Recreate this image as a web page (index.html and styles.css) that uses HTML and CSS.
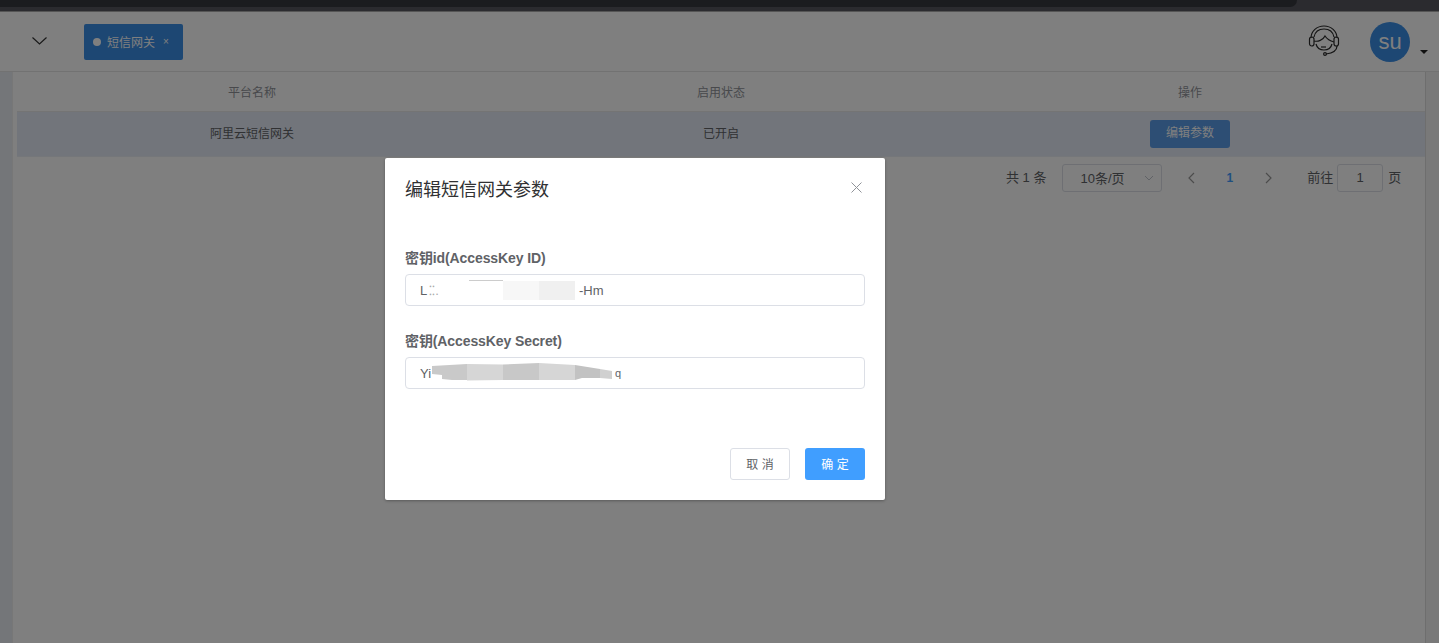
FILE: index.html
```html
<!DOCTYPE html>
<html lang="zh-CN">
<head>
<meta charset="utf-8">
<title>短信网关</title>
<link rel="stylesheet" href="styles.css">
</head>
<body>
<div class="chrome"><div class="chrome-tab"></div></div>
<div class="app">
  <header class="topbar">
    <svg class="collapse" width="15" height="8" viewBox="0 0 15 8"><path d="M.5.500l7 6.500 7-6.500" fill="none" stroke="#333" stroke-width="1.200"/></svg>
    <div class="tag"><span class="tag-dot"></span><span>短信网关</span><span class="tag-x">×</span></div>
    <div class="spacer"></div>
    <svg class="agent" width="32" height="32" viewBox="0 0 32 32" fill="none" stroke="#2a2a2a" stroke-width="1.200">
      <path d="M3 13C3 6 9 1 16 1s13 5 13 12"/>
      <path d="M6 12C7 7 11 4 16 4s9 3 10 8"/>
      <rect x="1.500" y="12" width="4.500" height="9" rx="2.200"/>
      <rect x="26" y="12" width="4.500" height="9" rx="2.200"/>
      <path d="M6 16c4 1 9-1 11-5 2 3 5 5 9 6"/>
      <path d="M8 19c1 4 4 6 8 6s7-2 8-6"/>
      <path d="M13 22h5"/>
      <path d="M29 21c0 4-4 7-11 8"/>
      <circle cx="17" cy="29" r="1.400"/>
    </svg>
    <div class="avatar">su</div>
    <span class="caret"></span>
  </header>
  <main class="content">
    <div class="side"></div>
    <div class="panel">
      <div class="row head"><div>平台名称</div><div>启用状态</div><div>操作</div></div>
      <div class="row body"><div class="cell">阿里云短信网关</div><div class="cell">已开启</div><div><span class="btn-edit">编辑参数</span></div></div>
      <div class="pager">
        <span class="pg-text">共 1 条</span>
        <div class="pg-select"><span class="pg-size">10条/页</span><svg width="10" height="6" viewBox="0 0 10 6"><path d="M1 1l4 4 4-4" fill="none" stroke="#c0c4cc"/></svg></div>
        <svg class="pg-arrow" width="8" height="12" viewBox="0 0 8 12"><path d="M7 1L2 6l5 5" fill="none" stroke="#999" stroke-width="1.200"/></svg>
        <b class="pg-num">1</b>
        <svg class="pg-arrow" width="8" height="12" viewBox="0 0 8 12"><path d="M1 1l5 5-5 5" fill="none" stroke="#999" stroke-width="1.200"/></svg>
        <span class="pg-text pg-goto">前往</span>
        <div class="pg-input">1</div>
        <span class="pg-text">页</span>
      </div>
    </div>
    <div class="gutter"></div>
  </main>
</div>
<div class="mask">
  <div class="dialog">
    <div class="dlg-head">
      <span class="dlg-title">编辑短信网关参数</span>
      <svg class="dlg-close" width="11" height="11" viewBox="0 0 11 11"><path d="M.5.500l10 10M10.500.500l-10 10" stroke="#909399" fill="none"/></svg>
    </div>
    <div class="field">
      <label class="lbl">密钥id(AccessKey ID)</label>
      <div class="inp"><span>L</span><span class="faint">⁚⁚.</span><svg class="blot blot-a" width="125" height="20" viewBox="0 0 125 20"><rect x="19" y="0" width="34" height="1" fill="#ccc"/><rect x="53" y="1" width="36" height="19" fill="#f7f7f7"/><rect x="89" y="1" width="36" height="19" fill="#f0f0f0"/></svg><span class="tail">-Hm</span></div>
    </div>
    <div class="field">
      <label class="lbl">密钥(AccessKey Secret)</label>
      <div class="inp"><span>Yi</span><svg class="blot blot-b" width="180" height="18" viewBox="0 0 180 18"><polygon points="0,3 35,1 35,17 20,17 10,16 10,12 0,11" fill="#c9c9c9"/><polygon points="35,1 71,1.500 71,17 35,17.500" fill="#d6d6d6"/><polygon points="71,1.500 107,0 107,17 71,17" fill="#c8c8c8"/><polygon points="107,0 143,2 143,17 107,17" fill="#d6d6d6"/><polygon points="143,2 168,6 168,15 150,15 143,17" fill="#c2c2c2"/><polygon points="168,6 180,8 180,16 168,15" fill="#d0d0d0"/></svg><span class="tail2">q</span></div>
    </div>
    <div class="dlg-foot">
      <span class="btn plain">取 消</span>
      <span class="btn primary">确 定</span>
    </div>
  </div>
</div>
</body>
</html>
```
FILE: styles.css
```css
* { box-sizing: border-box; }
html, body { margin: 0; height: 100%; }
body {
  width: 1439px; height: 643px; overflow: hidden; position: relative;
  background: #fff; color: #606266;
  font-family: "Liberation Sans", "Noto Sans CJK SC", sans-serif; font-size: 12px;
}
.chrome { height: 12px; background: #2b2b2f; border-bottom: 1px solid #555; }
.chrome-tab { width: 1297px; height: 7px; background: #1b1c1f; border-radius: 0 0 8px 0; }
.app { height: 631px; display: flex; flex-direction: column; }
.topbar {
  height: 60px; flex: none; display: flex; align-items: center;
  border-bottom: 1px solid #e4e4e4; background: #fff; padding-left: 32px;
}
.collapse { flex: none; margin-top: -2px; }
.tag {
  margin-left: 37px; width: 99px; height: 36px; background: #3a8ee6; border-radius: 2px;
  display: flex; align-items: center; color: #fff; padding-left: 9px;
  font-size: 12px;
}
.tag-dot { width: 8px; height: 8px; border-radius: 50%; background: #fff; margin-right: 6px; }
.tag-x { margin-left: 8px; font-size: 10px; }
.spacer { flex: 1; }
.agent { flex: none; margin-right: 30px; margin-top: -2px; }
.avatar {
  width: 40px; height: 40px; border-radius: 50%; background: #3a8ee6; color: #fff;
  font-size: 22px; display: flex; align-items: center; justify-content: center; flex: none;
}
.caret {
  flex: none; margin: 20px 11px 0 10px; width: 0; height: 0;
  border-left: 4px solid transparent; border-right: 4px solid transparent; border-top: 4px solid #222;
}
.content { flex: 1; display: flex; }
.side { width: 12px; background: #e9edf3; flex: none; }
.panel { flex: 1; padding-left: 4px; border-left: 1px solid #eee; }
.gutter { width: 14px; flex: none; background: #f3f3f3; border-left: 1px solid #ddd; }
.row { display: grid; grid-template-columns: 470px 468px 470px; align-items: center; text-align: center; }
.row.head { height: 40px; border-bottom: 1px solid #e8e8e8; color: #909399; }
.row.body { height: 45px; background: #e4ebf6; border-bottom: 1px solid #ebeef5; }
.cell { margin-bottom: 3px; }
.btn-edit {
  display: inline-block; width: 80px; height: 28px; line-height: 27px;
  background: #5a9ce8; color: #fff; border-radius: 3px;
}
.pager {
  height: 42px; display: flex; align-items: center; color: #606266;
  padding-left: 989px; font-size: 13px;
}
.pg-text { padding-bottom: 3px; }
.pg-size { padding-bottom: 1px; }
.pg-select {
  margin-left: 16px; width: 100px; height: 28px; border: 1px solid #dcdfe6; border-radius: 3px;
  display: flex; align-items: center; justify-content: space-between; padding: 0 7px 0 17px; font-size: 13px;
}
.pg-arrow { flex: none; }
.pg-select + .pg-arrow { margin-left: 25px; }
.pg-num { color: #409eff; font-size: 12px; margin-left: 31px; margin-right: 32px; }
.pg-goto { margin-left: 34px; }
.pg-input {
  width: 46px; height: 28px; margin: 0 5px 0 4px; border: 1px solid #dcdfe6; border-radius: 3px;
  text-align: center; line-height: 26px;
}
.mask { position: absolute; left: 0; right: 0; top: 12px; bottom: 0; background: rgba(0,0,0,.5); }
.dialog {
  position: absolute; left: 385px; top: 146px; width: 500px; height: 342px; background: #fff;
  border-radius: 2px; box-shadow: 0 1px 3px rgba(0,0,0,.3);
  padding: 20px; display: flex; flex-direction: column;
}
.dlg-head { display: flex; justify-content: space-between; align-items: flex-start; height: 60px; margin-bottom: 10px; }
.dlg-title { font-size: 18px; line-height: 24px; color: #303133; }
.dlg-close { margin-top: 4px; margin-right: 3px; }
.field { margin-bottom: 25px; }
.lbl { display: block; font-size: 14px; font-weight: 700; color: #606266; line-height: 20px; margin-bottom: 6px; letter-spacing: -0.1px; }
.inp {
  position: relative; height: 32px; border: 1px solid #dcdfe6; border-radius: 4px; padding-left: 14px;
  display: flex; align-items: center; font-size: 13px; color: #606266;
}
.faint { color: #aaa; margin-left: 2px; }
.blot { position: absolute; }
.blot-a { left: 44px; top: 5px; }
.blot-b { left: 26px; top: 5px; }
.tail { position: absolute; left: 173px; }
.tail2 { position: absolute; left: 209px; font-size: 11px; }
.dlg-foot { margin-top: auto; display: flex; justify-content: flex-end; gap: 15px; }
.btn {
  width: 60px; height: 32px; border-radius: 3px; display: flex; align-items: center; justify-content: center;
  font-size: 12px; padding-bottom: 2px;
}
.btn.plain { border: 1px solid #dcdfe6; color: #606266; background: #fff; }
.btn.primary { background: #409eff; color: #fff; }
```
